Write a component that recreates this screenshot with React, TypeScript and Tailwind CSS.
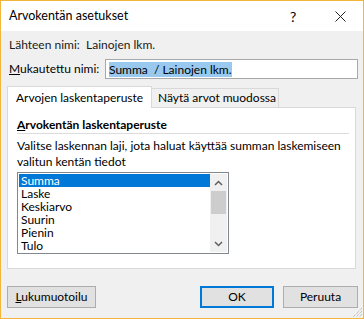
import React from "react"

const items = ["Summa", "Laske", "Keskiarvo", "Suurin", "Pienin", "Tulo"]

const Btn = ({
  children,
  className = "",
  primary = false,
}: {
  children: React.ReactNode
  className?: string
  primary?: boolean
}) => (
  <div
    className={
      "h-[22px] bg-[#e1e1e1] flex items-center justify-center text-[12px] text-black whitespace-nowrap " +
      (primary ? "border-2 border-[#0078d7] " : "border border-[#adadad] ") +
      className
    }
  >
    {children}
  </div>
)

export default function App() {
  return (
    <div
      className="w-[364px] h-[319px] border border-[#f2b63c] bg-[#f0f0f0] flex flex-col text-[12px] text-black relative overflow-hidden whitespace-nowrap"
      style={{ fontFamily: 'Lato, sans-serif' }}
    >
      {/* title bar */}
      <div className="h-[30px] bg-white flex items-center pl-[8px] shrink-0">
        <span className="text-[12.5px] leading-none">Arvokentän asetukset</span>
        <span className="ml-auto text-[14px] w-[10px] mr-[35px]">?</span>
        <svg width="11" height="11" viewBox="0 0 11 11" className="mr-[17px]">
          <path d="M0.5 0.5 L10.5 10.5 M10.5 0.5 L0.5 10.5" stroke="#222" strokeWidth="1" />
        </svg>
      </div>

      <div className="flex flex-col pl-[6px] pr-[5px]">
        <div className="flex items-center h-[16px] mt-[6px] text-[#1a1a1a]">
          <span className="w-[79px] pl-[2px]">Lähteen nimi:</span>
          <span>Lainojen lkm.</span>
        </div>

        <div className="flex items-center mt-[6px] h-[20px]">
          <span className="w-[98px] pl-[2px]">
            <span className="underline">M</span>ukautettu nimi:
          </span>
          <div className="flex-1 h-[20px] bg-white border border-[#a8a8a8] flex items-center pl-[3px]">
            <span className="bg-[#99c9ef] leading-[15px] whitespace-pre">Summa  / Lainojen lkm.</span>
          </div>
        </div>

        {/* tabs */}
        <div className="mt-[6px] flex items-end h-[22px] pr-[2px]">
          <div className="h-[22px] w-[145px] bg-white border border-b-0 border-[#d9d9d9] flex items-center pl-[8px] relative z-10 -mb-px">
            Arvojen laskentaperuste
          </div>
          <div className="h-[19px] w-[127px] bg-[#f0f0f0] border border-l-0 border-b-0 border-[#d9d9d9] flex items-center pl-[6px]">
            Näytä arvot muodossa
          </div>
        </div>
        <div className="h-[162px] bg-white border border-[#d9d9d9] mr-[2px] pl-[9px] pr-[6px]">
          <div className="mt-[9px] font-bold leading-[16px]">
            <span className="underline">A</span>rvokentän laskentaperuste
          </div>
          <div className="h-px bg-[#dcdcdc]" />
          <div className="mt-[4px] leading-[16px]">
            Valitse laskennan laji, jota haluat käyttää summan laskemiseen
            <br />
            valitun kentän tiedot
          </div>
          <div className="mt-[2px] w-[212px] h-[82px] border border-[#828790] flex p-px">
            <div className="flex-1 flex flex-col">
              {items.map((it, i) => (
                <div
                  key={it}
                  className={
                    "h-[13px] leading-[13px] pl-[2px] " +
                    (i === 0 ? "bg-[#0078d7] text-white" : "")
                  }
                >
                  {it}
                </div>
              ))}
            </div>
            <div className="w-[17px] bg-[#f0f0f0] flex flex-col items-center">
              <div className="h-[17px] flex items-center justify-center">
                <svg width="9" height="6" viewBox="0 0 9 6">
                  <path d="M1 5 L4.5 1.5 L8 5" stroke="#606060" strokeWidth="1.5" fill="none" />
                </svg>
              </div>
              <div className="w-[15px] h-[23px] bg-[#cdcdcd]" />
              <div className="mt-auto h-[17px] flex items-center justify-center">
                <svg width="9" height="6" viewBox="0 0 9 6">
                  <path d="M1 1 L4.5 4.5 L8 1" stroke="#606060" strokeWidth="1.5" fill="none" />
                </svg>
              </div>
            </div>
          </div>
        </div>

        {/* buttons */}
        <div className="flex mt-[17px] items-center">
          <Btn className="w-[89px]">
            <span>
              <span className="underline">L</span>ukumuotoilu
            </span>
          </Btn>
          <Btn primary className="w-[74px] ml-auto">
            OK
          </Btn>
          <Btn className="w-[75px] ml-[9px]">Peruuta</Btn>
        </div>
      </div>

      {/* resize grip */}
      <svg width="10" height="10" viewBox="0 0 10 10" className="absolute right-0 bottom-0">
        <path d="M9 3 L3 9 M9 6 L6 9 M9 0 L0 9" stroke="#b0b0b0" strokeWidth="1" strokeDasharray="1 1" />
      </svg>
    </div>
  )
}
